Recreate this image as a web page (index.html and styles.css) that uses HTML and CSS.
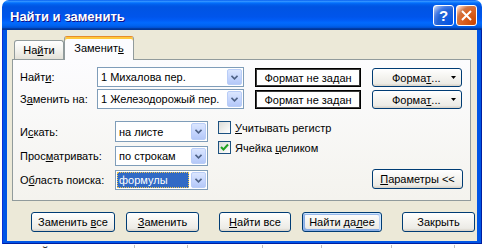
FILE: index.html
```html
<!DOCTYPE html>
<html lang="ru">
<head>
<meta charset="UTF-8">
<title>Найти и заменить</title>
<link rel="stylesheet" href="styles.css">
</head>
<body>
<div class="window">
	<div class="titlebar">
		<span class="title">Найти и заменить</span>
		<div class="title-buttons">
			<div class="tb-btn help">?</div>
			<div class="tb-btn close">
				<svg width="11" height="11" viewBox="0 0 11 11"><path d="M1 1 L10 10 M10 1 L1 10" stroke="#fff" stroke-width="2" fill="none"/></svg>
			</div>
		</div>
	</div>
	<div class="frame">
		<div class="client">
			<div class="tabs">
				<div class="tab">На<u>й</u>ти</div>
				<div class="tab active">Заменит<u>ь</u></div>
			</div>
			<div class="panel">
				<div class="find-grid">
					<span class="label">Найт<u>и</u>:</span>
					<div class="combo">
						<span class="combo-text">1 Михалова пер.</span>
						<span class="combo-btn"><svg width="7" height="5" viewBox="0 0 7 5"><path d="M0.5 0.8 L3.5 3.8 L6.5 0.8" fill="none" stroke="#4D6185" stroke-width="1.6"/></svg></span>
					</div>
					<div class="format-box">Формат не задан</div>
					<button class="btn format-btn">Форма<u>т</u>...<svg width="5" height="3" viewBox="0 0 5 3"><path d="M0 0 H5 L2.5 3 Z" fill="#000"/></svg></button>

					<span class="label">З<u>а</u>менить на:</span>
					<div class="combo">
						<span class="combo-text">1 Железодорожый пер.</span>
						<span class="combo-btn"><svg width="7" height="5" viewBox="0 0 7 5"><path d="M0.5 0.8 L3.5 3.8 L6.5 0.8" fill="none" stroke="#4D6185" stroke-width="1.6"/></svg></span>
					</div>
					<div class="format-box">Формат не задан</div>
					<button class="btn format-btn">Форма<u>т</u>...<svg width="5" height="3" viewBox="0 0 5 3"><path d="M0 0 H5 L2.5 3 Z" fill="#000"/></svg></button>
				</div>

				<div class="options">
					<div class="options-grid">
						<span class="label">И<u>с</u>кать:</span>
						<div class="combo">
							<span class="combo-text">на листе</span>
							<span class="combo-btn"><svg width="7" height="5" viewBox="0 0 7 5"><path d="M0.5 0.8 L3.5 3.8 L6.5 0.8" fill="none" stroke="#4D6185" stroke-width="1.6"/></svg></span>
						</div>
						<span class="label">Прос<u>м</u>атривать:</span>
						<div class="combo">
							<span class="combo-text">по строкам</span>
							<span class="combo-btn"><svg width="7" height="5" viewBox="0 0 7 5"><path d="M0.5 0.8 L3.5 3.8 L6.5 0.8" fill="none" stroke="#4D6185" stroke-width="1.6"/></svg></span>
						</div>
						<span class="label">О<u>б</u>ласть поиска:</span>
						<div class="combo">
							<span class="combo-text selected">формулы</span>
							<span class="combo-btn"><svg width="7" height="5" viewBox="0 0 7 5"><path d="M0.5 0.8 L3.5 3.8 L6.5 0.8" fill="none" stroke="#4D6185" stroke-width="1.6"/></svg></span>
						</div>
					</div>

					<div class="options-right">
						<div class="checks">
							<div class="check-row">
								<span class="checkbox"></span>
								<span><u>У</u>читывать регистр</span>
							</div>
							<div class="check-row">
								<span class="checkbox">
									<svg width="9" height="9" viewBox="0 0 9 9"><path d="M1 4 L3.5 6.5 L8 1.5" fill="none" stroke="#21A121" stroke-width="2"/></svg>
								</span>
								<span>Ячейка <u>ц</u>еликом</span>
							</div>
						</div>
						<button class="btn params-btn"><u>П</u>араметры &lt;&lt;</button>
					</div>
				</div>
			</div>

			<div class="actions">
				<div class="action-group">
					<button class="btn w84">Заменить <u>в</u>се</button>
					<button class="btn w73"><u>З</u>аменить</button>
				</div>
				<div class="action-group">
					<button class="btn w72"><u>Н</u>айти все</button>
					<button class="btn w80 default">Найти да<u>л</u>ее</button>
				</div>
				<button class="btn w73">Закрыть</button>
			</div>
		</div>
	</div>
</div>
<div class="sheet">
	<div class="cell c1">Железнодорожный пер</div>
	<div class="cell c2"></div>
	<div class="cell c3"></div>
	<div class="cell c4"></div>
	<div class="cell c5"></div>
	<div class="cell c6"></div>
</div>
</body>
</html>
```

FILE: styles.css
```css
body {
	margin: 0;
	width: 485px;
	height: 248px;
	overflow: hidden;
	background: #ffffff;
	font-family: "Liberation Sans", Arial, sans-serif;
	font-size: 11px;
	color: #000;
}

u {
	text-decoration-thickness: 1px;
	text-underline-offset: 1px;
}

.window {
	margin-left: 2px;
	width: 480px;
}

/* title bar */
.titlebar {
	height: 30px;
	display: flex;
	align-items: center;
	justify-content: space-between;
	padding: 0 5px 0 8px;
	box-sizing: border-box;
	border-radius: 7px 7px 0 0;
	background: linear-gradient(180deg, #0058ee 0%, #3593ff 4%, #288eff 6%, #127dff 8%, #036ffc 10%, #0262ee 14%, #0057e5 20%, #0054e3 24%, #0055eb 56%, #005bf5 66%, #026afe 76%, #0062ef 86%, #0052d6 92%, #0040ab 94%, #003092 100%);
}

.title {
	color: #fff;
	font-weight: bold;
	font-size: 13px;
	text-shadow: 1px 1px #0f1089;
	padding-top: 2px;
}

.title-buttons {
	display: flex;
	gap: 2px;
	padding-top: 1px;
}

.tb-btn {
	width: 21px;
	height: 21px;
	box-sizing: border-box;
	border: 1px solid #fff;
	border-radius: 3px;
	display: flex;
	align-items: center;
	justify-content: center;
	color: #fff;
	font-weight: bold;
	font-size: 15px;
}

.help {
	background: radial-gradient(circle at 90% 90%, #0054e9 0%, #2263d5 55%, #4479e4 70%, #a3bbec 90%, #fff 100%);
}

.close {
	background: radial-gradient(circle at 90% 90%, #cc4600 0%, #dc6527 55%, #cd7546 70%, #ffccb2 90%, #fff 100%);
}

/* frame + client */
.frame {
	background: #0055e5;
	padding: 0 5px 3px;
	box-shadow: inset 1px 0 #0831d9, inset -1px 0 #001ea0, inset 0 -1px #001ea0;
}

.client {
	height: 211px;
	box-sizing: border-box;
	background: #ece9d8;
	padding: 6px 0 0 5px;
}

/* tabs */
.tabs {
	display: flex;
	align-items: flex-end;
	height: 24px;
	padding-left: 2px;
	margin-bottom: -1px;
	position: relative;
	z-index: 1;
}

.tab {
	width: 50px;
	height: 19px;
	margin-bottom: 1px;
	box-sizing: border-box;
	border: 1px solid #919b9c;
	border-bottom: none;
	border-radius: 3px 3px 0 0;
	background: linear-gradient(180deg, #ffffff 0%, #f3f3ef 50%, #e3e1d8 100%);
	display: flex;
	align-items: center;
	justify-content: center;
}

.tab.active {
	width: 70px;
	height: 24px;
	margin-bottom: 0;
	border-top: 1px solid #e68b2c;
	box-shadow: inset 0 2px #ffc83c;
	background: #fcfcfe;
	padding-bottom: 2px;
}

/* panel */
.panel {
	width: 459px;
	height: 142px;
	box-sizing: border-box;
	border: 1px solid #919b9c;
	background: linear-gradient(180deg, #fcfcfe 0%, #f4f3ee 100%);
	padding: 7px 7px 0 7px;
}

.find-grid {
	display: grid;
	grid-template-columns: 66px 147px 106px 90px;
	grid-template-rows: 20px 20px;
	column-gap: 11px;
	row-gap: 2px;
	align-items: center;
}

.label {
	white-space: nowrap;
}

.combo {
	height: 100%;
	box-sizing: border-box;
	border: 1px solid #7f9db9;
	background: #fff;
	display: flex;
}

.combo-text {
	flex: 1;
	display: flex;
	align-items: center;
	padding-left: 3px;
	white-space: nowrap;
	overflow: hidden;
}

.combo-text.selected {
	margin: 1px;
	padding-left: 2px;
	background: #316ac5;
	color: #fff;
	outline: 1px dotted #f0c850;
	outline-offset: -1px;
}

.combo-btn {
	width: 15px;
	margin: 1px;
	box-sizing: border-box;
	border: 1px solid #b9cdf7;
	border-radius: 2px;
	background: linear-gradient(180deg, #dbe6fe 0%, #c3d4fd 60%, #b4c8f7 100%);
	display: flex;
	align-items: center;
	justify-content: center;
}

.format-box {
	height: 19px;
	margin-top: 1px;
	box-sizing: border-box;
	border: 1px solid #000;
	box-shadow: inset 0 0 0 1px #3a3a3a;
	background: #fff;
	display: flex;
	align-items: center;
	justify-content: center;
	white-space: nowrap;
}

/* buttons */
.btn {
	height: 20px;
	box-sizing: border-box;
	border: 1px solid #003c74;
	border-radius: 3px;
	background: linear-gradient(180deg, #ffffff 0%, #f5f4f0 45%, #ecebe6 85%, #d6d0c5 100%);
	font-family: "Liberation Sans", Arial, sans-serif;
	font-size: 11px;
	color: #000;
	padding: 0;
	white-space: nowrap;
}

.btn.default {
	box-shadow: inset -1px 1px #cee7ff, inset 1px 2px #98b8ea, inset -2px 2px #bcd4f6, inset 1px -1px #89ade4, inset 2px -2px #89ade4;
}

.format-btn {
	height: 19px;
	margin-top: 1px;
	display: flex;
	align-items: center;
	padding: 0 4px 0 19px;
}

.format-btn svg {
	margin-left: auto;
	margin-right: 1px;
}

/* lower options */
.options {
	display: flex;
	margin-top: 12px;
}

.options-grid {
	display: grid;
	grid-template-columns: 95px 93px;
	grid-template-rows: 21px 20px 20px;
	row-gap: 4px;
	align-items: center;
}

.options-right {
	flex: 1;
	margin-left: 10px;
	display: flex;
	flex-direction: column;
}

.checks {
	display: flex;
	flex-direction: column;
	gap: 7px;
}

.check-row {
	display: flex;
	align-items: center;
	gap: 4px;
	height: 13px;
}

.checkbox {
	width: 13px;
	height: 13px;
	box-sizing: border-box;
	border: 1px solid #1c5180;
	background: linear-gradient(135deg, #dcdcd7 0%, #ffffff 100%);
	display: flex;
	align-items: center;
	justify-content: center;
}

.params-btn {
	margin-top: auto;
	margin-bottom: 1px;
	align-self: flex-end;
	width: 91px;
}

/* bottom buttons */
.actions {
	display: flex;
	gap: 20px;
	margin-top: 11px;
	padding-left: 19px;
}

.action-group {
	display: flex;
	gap: 11px;
}

.w84 { width: 84px; }
.w73 { width: 73px; }
.w72 { width: 72px; }
.w80 { width: 80px; }

/* sheet behind */
.sheet {
	display: flex;
	height: 4px;
	overflow: hidden;
}

.cell {
	height: 16px;
	border-right: 1px solid #c0c0c0;
	box-sizing: border-box;
	font-size: 13px;
	line-height: 14px;
	white-space: nowrap;
	overflow: hidden;
	margin-top: 1px;
}

.c1 { width: 135px; text-indent: -66px; }
.c2 { width: 53px; }
.c3 { width: 75px; }
.c4 { width: 59px; }
.c5 { width: 70px; }
.c6 { width: 63px; }
```
